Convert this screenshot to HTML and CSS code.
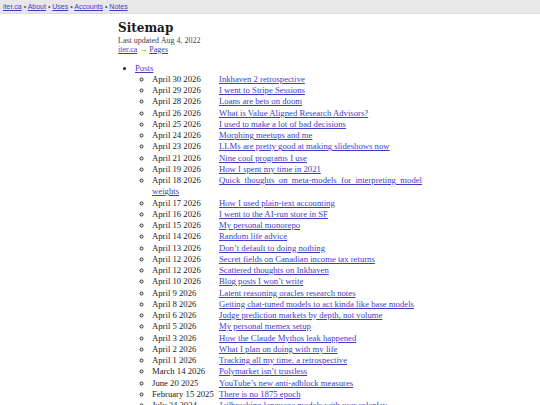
FILE: index.html
```html
<!doctype html>
<html>

<head>
    <title>Sitemap</title>
    <link rel="stylesheet" href="styles.css">
</head>

<body>
    <div class="TopBar">
        <a href="#">iter.ca</a> • <a href="#">About</a> • <a href="#">Uses</a> • <a href="#">Accounts</a> • <a href="#">Notes</a>
    </div>
    <div class="Page">
        <h1>Sitemap</h1>
        <p class="Meta">Last updated Aug 4, 2022<br><a href="#">iter.ca</a> → <a href="#">Pages</a></p>
        <ul class="Sections">
            <li><a href="#">Posts</a>
                <ul class="Posts">
                    <li><span class="Date">April 30 2026</span><a href="#">Inkhaven 2 retrospective</a></li>
                    <li><span class="Date">April 29 2026</span><a href="#">I went to Stripe Sessions</a></li>
                    <li><span class="Date">April 28 2026</span><a href="#">Loans are bets on doom</a></li>
                    <li><span class="Date">April 26 2026</span><a href="#">What is Value Aligned Research Advisors?</a></li>
                    <li><span class="Date">April 25 2026</span><a href="#">I used to make a lot of bad decisions</a></li>
                    <li><span class="Date">April 24 2026</span><a href="#">Morphing meetups and me</a></li>
                    <li><span class="Date">April 23 2026</span><a href="#">LLMs are pretty good at making slideshows now</a></li>
                    <li><span class="Date">April 21 2026</span><a href="#">Nine cool programs I use</a></li>
                    <li><span class="Date">April 19 2026</span><a href="#">How I spent my time in 2021</a></li>
                    <li><span class="Date">April 18 2026</span><a href="#">Quick thoughts on meta-models for interpreting model weights</a></li>
                    <li><span class="Date">April 17 2026</span><a href="#">How I used plain-text accounting</a></li>
                    <li><span class="Date">April 16 2026</span><a href="#">I went to the AI-run store in SF</a></li>
                    <li><span class="Date">April 15 2026</span><a href="#">My personal monorepo</a></li>
                    <li><span class="Date">April 14 2026</span><a href="#">Random life advice</a></li>
                    <li><span class="Date">April 13 2026</span><a href="#">Don’t default to doing nothing</a></li>
                    <li><span class="Date">April 12 2026</span><a href="#">Secret fields on Canadian income tax returns</a></li>
                    <li><span class="Date">April 12 2026</span><a href="#">Scattered thoughts on Inkhaven</a></li>
                    <li><span class="Date">April 10 2026</span><a href="#">Blog posts I won’t write</a></li>
                    <li><span class="Date">April 9 2026</span><a href="#">Latent reasoning oracles research notes</a></li>
                    <li><span class="Date">April 8 2026</span><a href="#">Getting chat-tuned models to act kinda like base models</a></li>
                    <li><span class="Date">April 6 2026</span><a href="#">Judge prediction markets by depth, not volume</a></li>
                    <li><span class="Date">April 5 2026</span><a href="#">My personal memex setup</a></li>
                    <li><span class="Date">April 3 2026</span><a href="#">How the Claude Mythos leak happened</a></li>
                    <li><span class="Date">April 2 2026</span><a href="#">What I plan on doing with my life</a></li>
                    <li><span class="Date">April 1 2026</span><a href="#">Tracking all my time, a retrospective</a></li>
                    <li><span class="Date">March 14 2026</span><a href="#">Polymarket isn’t trustless</a></li>
                    <li><span class="Date">June 20 2025</span><a href="#">YouTube’s new anti-adblock measures</a></li>
                    <li><span class="Date">February 15 2025</span><a href="#">There is no 1875 epoch</a></li>
                    <li><span class="Date">July 24 2024</span><a href="#">Jailbreaking language models with user roleplay</a></li>
                    <li><span class="Date">May 2 2024</span><a href="#">Notes on running a small website</a></li>
                </ul>
            </li>
        </ul>
    </div>
</body>

</html>
```

FILE: styles.css
```css
html,
body {
    background-color: #fff;
}

body {
    margin: 0;
    color: #222;
    font-family: "Liberation Serif", serif;
}

a {
    color: #3d3dcc;
}

.TopBar {
    background: #e8e8e8;
    border-bottom: 1px solid #dcdcdc;
    height: 13px;
    line-height: 13px;
    padding: 0 3px;
    font-family: "Liberation Sans", Arial, sans-serif;
    font-size: 7px;
    color: #555;
}

.Page {
    width: 304px;
    margin: 0 auto;
}

h1 {
    font-family: "DejaVu Serif", serif;
    font-size: 12px;
    line-height: 14px;
    margin: 7px 0 0;
    color: #1a1a1a;
}

.Meta {
    font-size: 8px;
    line-height: 8.5px;
    margin: 2px 0 0;
    color: #444;
}

.Sections {
    margin: 8.5px 0 0;
    padding-left: 17px;
    font-size: 8.7px;
    line-height: 11.25px;
    text-align: justify;
}

.Posts {
    padding-left: 17px;
    margin: 0;
    list-style-type: circle;
}

.Date {
    display: inline-block;
    width: 67px;
}
```
